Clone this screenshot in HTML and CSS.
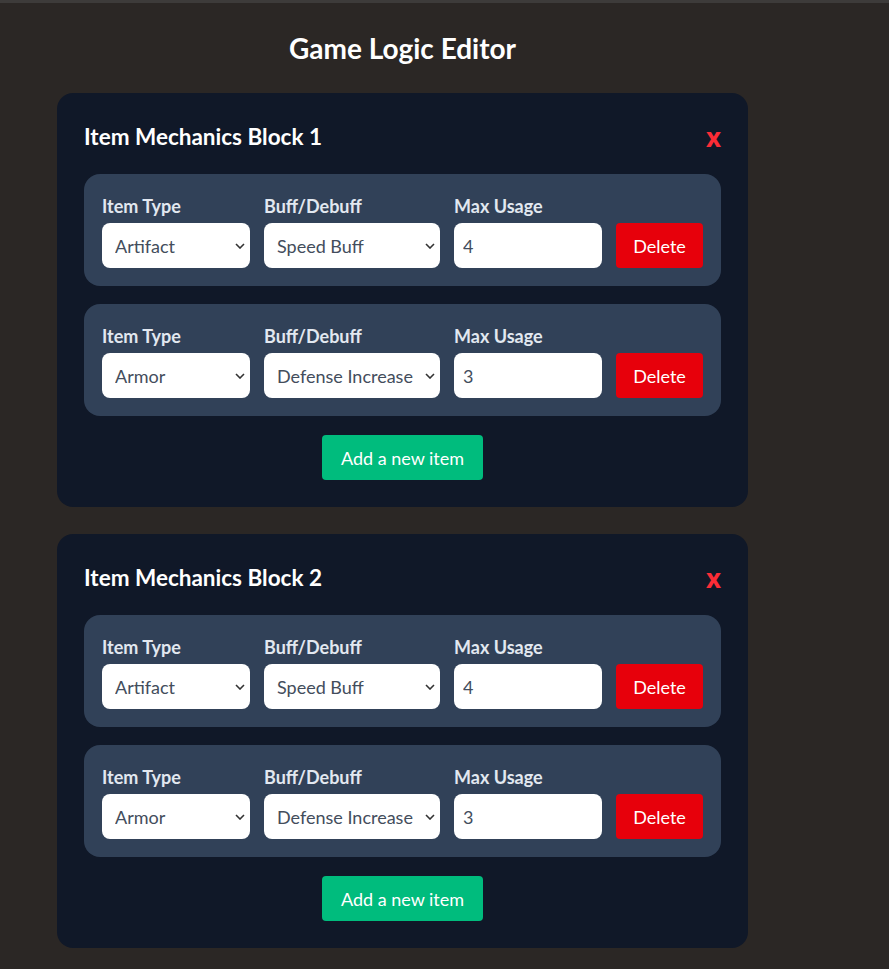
FILE: index.html
```html
<!DOCTYPE html>
<html lang="en">
<head>
  <meta charset="UTF-8" />
  <meta name="viewport" content="width=device-width, initial-scale=1.0" />
  <title>Game Logic Editor</title>
  <link rel="stylesheet" href="styles.css">
</head>
<body>
  <div class="topbar"></div>

  <main class="editor">
    <h1>Game Logic Editor</h1>

    <!-- Block 1 -->
    <section class="block">
      <div class="block-head">
        <h2>Item Mechanics Block 1</h2>
        <button class="remove" type="button">x</button>
      </div>

      <div class="item-row">
        <div class="field type">
          <label>Item Type</label>
          <div class="select-wrap">
            <select>
              <option selected>Artifact</option>
              <option>Armor</option>
              <option>Weapon</option>
              <option>Potion</option>
            </select>
            <svg class="chevron" viewBox="0 0 10 6"><path d="M1 1l4 4 4-4" /></svg>
          </div>
        </div>
        <div class="field effect">
          <label>Buff/Debuff</label>
          <div class="select-wrap">
            <select>
              <option selected>Speed Buff</option>
              <option>Defense Increase</option>
              <option>Attack Boost</option>
              <option>Poison</option>
            </select>
            <svg class="chevron" viewBox="0 0 10 6"><path d="M1 1l4 4 4-4" /></svg>
          </div>
        </div>
        <div class="field usage">
          <label>Max Usage</label>
          <input type="number" value="4" />
        </div>
        <button class="delete" type="button">Delete</button>
      </div>

      <div class="item-row">
        <div class="field type">
          <label>Item Type</label>
          <div class="select-wrap">
            <select>
              <option>Artifact</option>
              <option selected>Armor</option>
              <option>Weapon</option>
              <option>Potion</option>
            </select>
            <svg class="chevron" viewBox="0 0 10 6"><path d="M1 1l4 4 4-4" /></svg>
          </div>
        </div>
        <div class="field effect">
          <label>Buff/Debuff</label>
          <div class="select-wrap">
            <select>
              <option>Speed Buff</option>
              <option selected>Defense Increase</option>
              <option>Attack Boost</option>
              <option>Poison</option>
            </select>
            <svg class="chevron" viewBox="0 0 10 6"><path d="M1 1l4 4 4-4" /></svg>
          </div>
        </div>
        <div class="field usage">
          <label>Max Usage</label>
          <input type="number" value="3" />
        </div>
        <button class="delete" type="button">Delete</button>
      </div>

      <div class="add-wrap">
        <button class="add" type="button">Add a new item</button>
      </div>
    </section>

    <!-- Block 2 -->
    <section class="block">
      <div class="block-head">
        <h2>Item Mechanics Block 2</h2>
        <button class="remove" type="button">x</button>
      </div>

      <div class="item-row">
        <div class="field type">
          <label>Item Type</label>
          <div class="select-wrap">
            <select>
              <option selected>Artifact</option>
              <option>Armor</option>
              <option>Weapon</option>
              <option>Potion</option>
            </select>
            <svg class="chevron" viewBox="0 0 10 6"><path d="M1 1l4 4 4-4" /></svg>
          </div>
        </div>
        <div class="field effect">
          <label>Buff/Debuff</label>
          <div class="select-wrap">
            <select>
              <option selected>Speed Buff</option>
              <option>Defense Increase</option>
              <option>Attack Boost</option>
              <option>Poison</option>
            </select>
            <svg class="chevron" viewBox="0 0 10 6"><path d="M1 1l4 4 4-4" /></svg>
          </div>
        </div>
        <div class="field usage">
          <label>Max Usage</label>
          <input type="number" value="4" />
        </div>
        <button class="delete" type="button">Delete</button>
      </div>

      <div class="item-row">
        <div class="field type">
          <label>Item Type</label>
          <div class="select-wrap">
            <select>
              <option>Artifact</option>
              <option selected>Armor</option>
              <option>Weapon</option>
              <option>Potion</option>
            </select>
            <svg class="chevron" viewBox="0 0 10 6"><path d="M1 1l4 4 4-4" /></svg>
          </div>
        </div>
        <div class="field effect">
          <label>Buff/Debuff</label>
          <div class="select-wrap">
            <select>
              <option>Speed Buff</option>
              <option selected>Defense Increase</option>
              <option>Attack Boost</option>
              <option>Poison</option>
            </select>
            <svg class="chevron" viewBox="0 0 10 6"><path d="M1 1l4 4 4-4" /></svg>
          </div>
        </div>
        <div class="field usage">
          <label>Max Usage</label>
          <input type="number" value="3" />
        </div>
        <button class="delete" type="button">Delete</button>
      </div>

      <div class="add-wrap">
        <button class="add" type="button">Add a new item</button>
      </div>
    </section>
  </main>
</body>
</html>
```

FILE: styles.css
```css
:root {
  --bg: #2b2725;
  --panel: #101828;
  --row: #314158;
  --label: #e2e8f0;
  --field-text: #434d5c;
  --red: #e7000b;
  --red-x: #fb2c36;
  --green: #00bc7d;
}

* {
  box-sizing: border-box;
}

body {
  margin: 0;
  background: var(--bg);
  font-family: Lato, 'Noto Sans', sans-serif;
  color: #fff;
}

.topbar {
  height: 3px;
  background: #3d3b3a;
}

.editor {
  width: 691px;
  margin-left: 57px;
  padding-top: 27px;
}

h1 {
  margin: 0 0 27px;
  text-align: center;
  font-size: 28px;
  line-height: 36px;
  font-weight: 700;
}

.block {
  background: var(--panel);
  border-radius: 16px;
  padding: 28px 27px 27px;
  margin-bottom: 27px;
}

.block-head {
  display: flex;
  justify-content: space-between;
  align-items: center;
  margin-bottom: 21px;
}

h2 {
  margin: 0;
  font-size: 22.5px;
  line-height: 32px;
  font-weight: 700;
}

.remove {
  background: none;
  border: none;
  padding: 0;
  color: var(--red-x);
  font-family: 'Noto Sans', sans-serif;
  font-size: 26px;
  font-weight: 700;
  line-height: 32px;
  cursor: pointer;
}

.item-row {
  display: flex;
  align-items: flex-end;
  gap: 14px;
  background: var(--row);
  border-radius: 16px;
  padding: 18px;
  margin-bottom: 18px;
}

.field label {
  display: block;
  color: var(--label);
  font-size: 18px;
  line-height: 28px;
  font-weight: 700;
  margin-bottom: 3px;
}

.field.type { width: 148px; }
.field.effect { width: 176px; }
.field.usage { width: 148px; }

.select-wrap {
  position: relative;
}

select, input {
  display: block;
  width: 100%;
  height: 45px;
  border: none;
  border-radius: 8px;
  background: #fff;
  color: var(--field-text);
  font-family: inherit;
  font-size: 18px;
}

select {
  appearance: none;
  -webkit-appearance: none;
  padding: 0 20px 0 13px;
}

input {
  padding: 0 9px;
  -moz-appearance: textfield;
}

input::-webkit-inner-spin-button,
input::-webkit-outer-spin-button {
  -webkit-appearance: none;
  margin: 0;
}

.chevron {
  position: absolute;
  right: 5px;
  top: 20px;
  width: 10px;
  height: 6px;
  fill: none;
  stroke: #333;
  stroke-width: 1.6;
  pointer-events: none;
}

.delete, .add {
  border: none;
  border-radius: 4px;
  color: #fff;
  font-family: inherit;
  font-size: 18px;
  height: 45px;
  cursor: pointer;
}

.delete {
  width: 87px;
  background: var(--red);
}

.add-wrap {
  display: flex;
  justify-content: center;
  padding-top: 1px;
}

.add {
  width: 161px;
  background: var(--green);
}
```
